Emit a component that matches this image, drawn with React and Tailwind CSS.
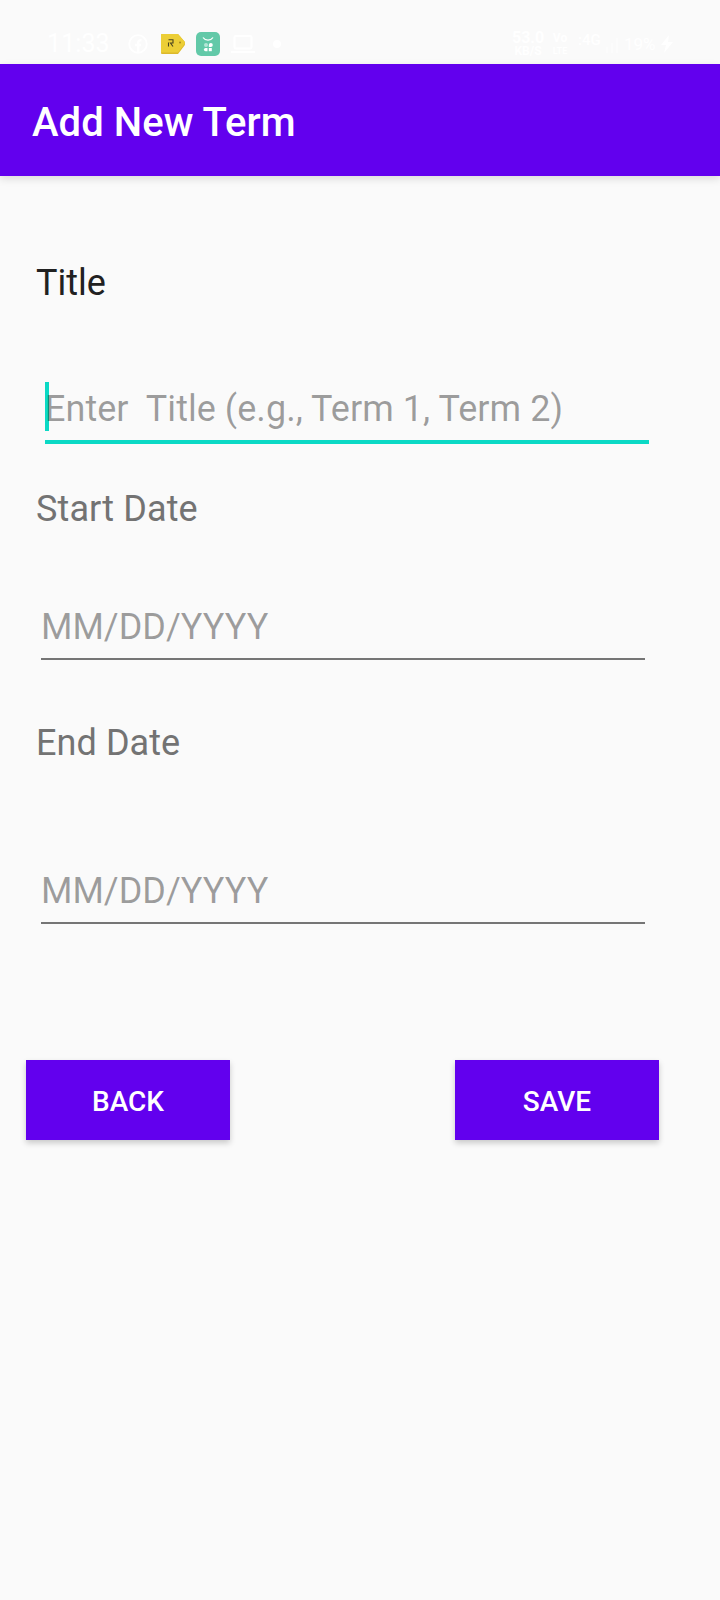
import React, { useState } from "react";

const FIELDS = [
  {
    id: "title",
    label: "Title",
    placeholder: "Enter  Title (e.g., Term 1, Term 2)",
    active: true,
    labelClass: "text-[#212121]",
    wrapClass: "mt-[84px] ml-[45px]",
  },
  {
    id: "start",
    label: "Start Date",
    placeholder: "MM/DD/YYYY",
    labelClass: "mt-11 text-[#737373] tracking-[0.12px]",
    wrapClass: "mt-[76px] ml-[41px]",
  },
  {
    id: "end",
    label: "End Date",
    placeholder: "MM/DD/YYYY",
    labelClass: "mt-[62px] text-[#737373] tracking-[0.08px]",
    wrapClass: "mt-[106px] ml-[41px]",
  },
];

const StatusBar = () => (
  <div className="flex h-16 items-start justify-between pt-8 pl-[47px] pr-[47px] text-white">
    <div className="flex h-6 items-center">
      <span className="w-[63px] text-[25px] leading-6 tracking-[0.1px]">11:33</span>

      {/* facebook */}
      <svg className="ml-[18px]" width="20" height="20" viewBox="0 0 20 20" fill="none">
        <circle cx="10" cy="10" r="8.8" stroke="currentColor" strokeWidth="1.8" />
        <path
          d="M10.2 18V9c0-2 1-3 3.3-2.8M7 11h6"
          stroke="currentColor"
          strokeWidth="2.4"
        />
      </svg>

      {/* price tag */}
      <svg className="ml-[13px]" width="24" height="20" viewBox="0 0 24 20">
        <path d="M1 0h16l6.5 7.5c.8 1.2.8 2.8 0 4L17 20H1a1 1 0 0 1-1-1V1a1 1 0 0 1 1-1z" fill="#dcb92c" />
        <path d="M1 0h16l6.5 7.5c.5 1 .5 1.8 0 2.6L17 18.5H0V1a1 1 0 0 1 1-1z" fill="#ecce36" />
        <path
          d="M7.5 12.5V8.5M7.5 5.7H12V9H9.5l2.5 3.5"
          fill="none"
          stroke="#4a4420"
          strokeWidth="1.1"
        />
        <circle cx="19" cy="8.6" r="1" fill="#a98a1c" />
      </svg>

      {/* app tile */}
      <svg className="ml-[11px]" width="24" height="24" viewBox="0 0 24 24">
        <rect width="24" height="24" rx="5" fill="#62c9a8" />
        <path d="M7 5.5c2.5 3.6 7.5 3.6 10 0" fill="none" stroke="#fff" strokeWidth="1.3" />
        <circle cx="10" cy="13" r="2" fill="#b5e6d6" />
        <path d="M12.8 15v-2a2 2 0 1 1 2 2z" fill="#fff" />
        <path d="M11.5 16v3.2h-2a1.6 1.6 0 0 1 0-3.2z" fill="#fff" />
        <rect x="12.8" y="16" width="3" height="3.2" fill="#fff" />
      </svg>

      {/* laptop */}
      <svg className="ml-[11px]" width="24" height="20" viewBox="0 0 24 20" fill="none">
        <rect x="3.5" y="2" width="17" height="12.5" rx="1" stroke="currentColor" strokeWidth="2" />
        <path d="M0 18h24" stroke="currentColor" strokeWidth="2.2" />
      </svg>

      <span className="ml-[18px] size-2 rounded-full bg-white" />
    </div>

    <div className="flex h-6 items-center">
      <span className="w-8 text-center text-base leading-3 font-bold">
        53.0
        <br />
        <span className="text-[12px]">KB/S</span>
      </span>
      <span className="ml-2 w-4 text-center text-[12px] leading-3 font-bold">
        Vo
        <br />
        <span className="text-[9px]">LTE</span>
      </span>
      <span className="ml-2.5 w-[26px] pb-2 text-[15px] leading-4 font-medium">:4G</span>
      {/* signal */}
      <svg className="ml-0.5" width="14" height="18" viewBox="0 0 14 18" fill="#fff" opacity="0.5">
        <path d="M0 12h2v6H0zM5 8h2v10H5zM10 3h2v15h-2z" />
      </svg>
      <span className="ml-1 w-[33px] text-[17px] leading-6">19%</span>
      <svg className="ml-1" width="12" height="18" viewBox="0 0 12 18" fill="#fff">
        <path d="M8 0 0 10h5l-2 8 9-11H7z" />
      </svg>
    </div>
  </div>
);

const Field = ({ field, value, onChange }) => (
  <>
    <label
      htmlFor={field.id}
      className={["ml-9 block text-4xl leading-[42px]", field.labelClass].join(" ")}
    >
      {field.label}
    </label>
    <div
      className={[
        "relative w-[604px]",
        field.wrapClass,
        field.active
          ? "border-b-4 border-[#0bd9c5] tracking-[0.04px]"
          : "border-b-2 border-[#757575]",
      ].join(" ")}
    >
      {/* text cursor */}
      {field.active && (
        <span className="absolute -top-[6px] left-0 h-[49px] w-1 bg-[#0bd9c5]" />
      )}
      <input
        id={field.id}
        value={value}
        onChange={onChange}
        placeholder={field.placeholder}
        className="relative block h-[52px] w-full bg-transparent pb-[10px] text-4xl leading-[42px] text-[#212121] caret-transparent outline-none placeholder:text-black/38"
      />
    </div>
  </>
);

const Button = ({ children, onClick }) => (
  <button
    onClick={onClick}
    className="h-20 w-[204px] bg-[#6200ee] pt-1 text-[28px] leading-8 font-medium text-white shadow-[0_3px_6px_rgba(0,0,0,0.2)]"
  >
    {children}
  </button>
);

export default function App() {
  const [values, setValues] = useState({ title: "", start: "", end: "" });

  const reset = () => setValues({ title: "", start: "", end: "" });

  return (
    <div className="h-[1600px] w-[720px] overflow-hidden bg-[#fafafa] font-[Roboto,sans-serif]">
      <StatusBar />

      <header className="flex h-28 items-center bg-[#6200ee] pt-1.5 pl-8 shadow-[0_3px_8px_rgba(0,0,0,0.12)]">
        <h1 className="text-[40px] leading-[48px] font-medium tracking-[0.05px] text-white">
          Add New Term
        </h1>
      </header>

      <main className="pt-[86px]">
        {FIELDS.map((f) => (
          <Field
            key={f.id}
            field={f}
            value={values[f.id]}
            onChange={(e) => setValues({ ...values, [f.id]: e.target.value })}
          />
        ))}

        <div className="mt-[136px] flex justify-between pl-[26px] pr-[61px]">
          <Button onClick={reset}>BACK</Button>
          <Button>SAVE</Button>
        </div>
      </main>
    </div>
  );
}
